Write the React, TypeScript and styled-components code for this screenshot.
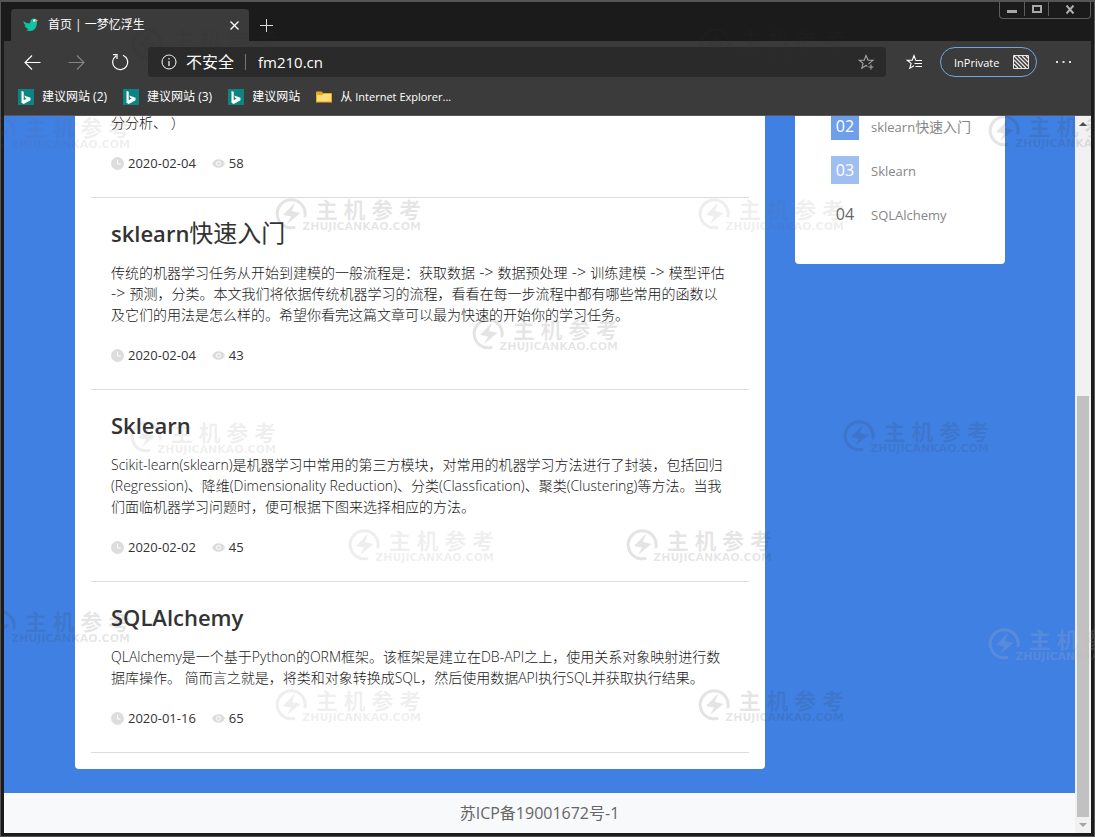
import React from 'react';
import styled, { createGlobalStyle } from 'styled-components';

const latin = '"Open Sans", "Noto Sans CJK SC", sans-serif';

const GlobalStyle = createGlobalStyle`
  *, *::before, *::after { box-sizing: border-box; }
  html, body { margin: 0; padding: 0; }
  body { font-family: ${latin}; background: #1b1b1b; }
  h2, p, ol, li { margin: 0; padding: 0; }
  ol { list-style: none; }
  a { color: inherit; text-decoration: none; }
  button { font: inherit; color: inherit; background: none; border: 0; padding: 0; cursor: pointer; }
  svg { display: block; flex: none; }
`;

/* ---------- window ---------- */

const Window = styled.div`
  position: relative;
  display: flex;
  flex-direction: column;
  height: 100vh;
  overflow: hidden;
  background: #1b1b1b;
  border: 1px solid #565656;
  border-top-width: 2px;
  padding: 0 3px 3px;
`;

const TabStrip = styled.div`
  display: flex;
  align-items: flex-end;
  flex: none;
  height: 39px;
  padding-left: 7px;
`;

const Tab = styled.div`
  display: flex;
  align-items: center;
  width: 238px;
  height: 32px;
  padding: 0 9px 0 12px;
  gap: 10px;
  border-radius: 4px 4px 0 0;
  background: #3b3b3b;
  color: #fff;
  font-size: 12px;
  line-height: 16px;
`;

const TabTitle = styled.span`
  flex: 1;
  white-space: nowrap;
`;

const StripButton = styled.button`
  display: grid;
  place-items: center;
  width: 12px;
  height: 32px;
`;

const NewTabButton = styled(StripButton)`
  width: 35px;
`;

const WindowControls = styled.div`
  display: flex;
  align-self: flex-start;
  margin-left: auto;
  height: 17px;
  border: 1px solid #5e5e5e;
  border-top: 0;
  border-radius: 0 0 4px 4px;
`;

const WindowButton = styled.button<{ $wide?: boolean }>`
  display: grid;
  place-items: center;
  width: ${(p) => (p.$wide ? 42 : 24)}px;
  height: 14px;
  border-left: 1px solid #5e5e5e;
  &:first-child { border-left: 0; }
`;

const Toolbar = styled.div`
  display: flex;
  align-items: center;
  flex: none;
  height: 42px;
  padding: 0 10px;
  gap: 8px;
  background: #3b3b3b;
  color: #fff;
`;

const ToolButton = styled.button`
  display: grid;
  place-items: center;
  flex: none;
  width: 36px;
  height: 30px;
`;

const AddressBar = styled.div`
  display: flex;
  align-items: center;
  flex: 1;
  min-width: 0;
  height: 30px;
  margin: 0 2px;
  padding: 0 11px 0 13px;
  border-radius: 4px;
  background: #2a2a2a;
  font-size: 16px;
`;

const Security = styled.span`
  margin-left: 9px;
  padding-right: 11px;
  border-right: 1px solid #777;
  line-height: 16px;
  white-space: nowrap;
`;

const AddressInput = styled.input`
  flex: 1;
  min-width: 0;
  padding: 0 0 0 12px;
  border: 0;
  outline: 0;
  background: none;
  color: #fff;
  font-family: ${latin};
  font-size: 15px;
`;

const InPrivate = styled.button`
  display: flex;
  align-items: center;
  justify-content: space-between;
  flex: none;
  width: 97px;
  height: 30px;
  padding: 0 7px 0 13px;
  border: 1px solid #6fa8dc;
  border-radius: 15px;
  font-size: 11px;
`;

const Bookmarks = styled.nav`
  display: flex;
  align-items: center;
  flex: none;
  gap: 16px;
  height: 33px;
  padding: 0 14px 4px;
  border-bottom: 1px solid #5a5555;
  background: #3b3b3b;
  color: #fff;
`;

const Bookmark = styled.a`
  display: flex;
  align-items: center;
  gap: 8px;
  font-size: 12px;
  line-height: 16px;
  white-space: nowrap;
`;

/* ---------- page ---------- */

const Viewport = styled.div`
  display: flex;
  flex: 1;
  min-height: 0;
`;

const Page = styled.div`
  display: flex;
  flex-direction: column;
  justify-content: flex-end;
  flex: 1;
  min-width: 0;
  overflow: hidden;
  background: #4080e3;
`;

const Columns = styled.div`
  display: flex;
  align-items: flex-start;
  flex: none;
  gap: 30px;
  padding: 0 70px 24px 71px;
`;

const ArticleList = styled.main`
  flex: 1;
  min-width: 0;
  padding: 0 16px 16px;
  border-radius: 0 0 4px 4px;
  background: #fff;
`;

const Article = styled.article`
  padding: 19px 20px 24px;
  border-bottom: 1px solid #ddd;
  color: #333;
  &:first-child { padding-top: 0; }
`;

/* Western words are set at their own size beside the Chinese around them. */
const Word = styled.span<{ $size: number; $weight?: number }>`
  font-size: ${(p) => p.$size}px;
  font-weight: ${(p) => p.$weight ?? 'inherit'};
  line-height: 1;
`;

const Title = styled.h2`
  margin-bottom: 13px;
  font-size: 24px;
  font-weight: 400;
  line-height: 32px;
`;

const Summary = styled.p`
  color: #151515;
  font-size: 14px;
  font-weight: 300;
  line-height: 21px;
  white-space: nowrap;
`;

const Meta = styled.div`
  display: flex;
  align-items: center;
  gap: 16px;
  margin-top: 20px;
  font-size: 13px;
  line-height: 20px;
`;

const MetaItem = styled.span`
  display: flex;
  align-items: center;
  gap: 4px;
`;

const Ranking = styled.aside`
  flex: none;
  width: 210px;
  padding: 0 16px 36px 36px;
  border-radius: 0 0 4px 4px;
  background: #fff;
`;

const RankList = styled.ol`
  display: grid;
  gap: 16px;
`;

const RankLink = styled.a`
  display: flex;
  align-items: center;
  gap: 12px;
  color: #868686;
  font-size: 14px;
  white-space: nowrap;
`;

const RankNumber = styled.span<{ $fill?: string }>`
  width: 28px;
  height: 28px;
  background: ${(p) => p.$fill ?? 'transparent'};
  color: ${(p) => (p.$fill ? '#fff' : '#666')};
  font-size: 16px;
  line-height: 28px;
  text-align: center;
`;

const Footer = styled.footer`
  flex: none;
  background: #f8f9fb;
  color: #666;
  font-size: 16px;
  line-height: 40px;
  text-align: center;
`;

const Scrollbar = styled.div`
  display: flex;
  flex-direction: column;
  flex: none;
  width: 16px;
  padding: 0 2px;
  background: #f1f1f1;
`;

const ScrollArrow = styled.button`
  display: grid;
  place-items: center;
  height: 16px;
`;

const ScrollGap = styled.div`
  flex: 264;
`;

const ScrollThumb = styled.div`
  flex: 421;
  background: #c1c1c1;
`;

/* ---------- watermark ---------- */

type Tone = 'dark' | 'soft' | 'pale';

const toneColor: Record<Tone, string> = {
  dark: 'rgba(50, 50, 50, 0.13)',
  soft: 'rgba(90, 90, 90, 0.1)',
  pale: 'rgba(185, 185, 185, 0.2)',
};

const MarkLayer = styled.div`
  position: absolute;
  inset: -2px 0 0 -1px;
  overflow: hidden;
  pointer-events: none;
`;

const Mark = styled.div<{ $x: number; $y: number; $tone: Tone }>`
  position: absolute;
  left: ${(p) => p.$x}px;
  top: ${(p) => p.$y}px;
  display: flex;
  width: 150px;
  color: ${(p) => toneColor[p.$tone]};
  white-space: nowrap;
`;

const MarkText = styled.div`
  display: flex;
  flex-direction: column;
  align-items: flex-end;
  width: 120px;
  margin-left: -6px;
`;

const MarkName = styled.span`
  font-size: 22px;
  font-weight: 700;
  line-height: 24px;
`;

const MarkSite = styled.span`
  font-family: "DejaVu Sans", sans-serif;
  font-size: 11px;
  font-weight: 700;
  line-height: 11px;
`;

const marks: [number, number, Tone][] = [
  [131, 27, 'dark'], [699, 27, 'dark'], [-16, 115, 'soft'], [988, 114, 'dark'],
  [275, 197, 'dark'], [698, 197, 'soft'], [472, 317, 'dark'], [130, 420, 'soft'],
  [843, 419, 'dark'], [348, 528, 'soft'], [626, 528, 'dark'], [-16, 609, 'dark'],
  [988, 627, 'pale'], [275, 688, 'soft'], [698, 688, 'dark'],
];

/* ---------- icons ---------- */

const Bird = () => (
  <svg width="15" height="16" viewBox="0 0 15 16">
    <path d="M.5 4c2 2 4.500 2.600 6.500 2.200C7 3.500 8.800 1.500 11 1.500c1.800 0 3 1.400 3 3.500C14 11 11 14 7 14c-2 0-3-.6-4-1 1 0 2-.3 2.500-1C3 11 2 10 1.500 8.500l1.500.2C1.500 7.500.500 6 .5 4z" fill="#0fc3a4" />
    <circle cx="11.200" cy="3.500" r="1.200" fill="#fff" />
    <path d="M12.500 2l2.500 1.600-2.500 1.200z" fill="#e6b13c" />
  </svg>
);

const Bing = () => (
  <svg width="16" height="16" viewBox="0 0 16 16">
    <path d="M0 0h16v16H0z" fill="#0c8484" />
    <path d="M3.500 2l2.200.8v8.400l2.900-1.700-1.500-.7-.9-2.200 6.300 2.200v2.400l-6.800 3.900-2.200-1.400z" fill="#fff" />
  </svg>
);

const Folder = () => (
  <svg width="16" height="16" viewBox="0 0 16 16">
    <path d="M0 3.500C0 3 .4 2.500 1 2.500h4.500L7 4h8c.6 0 1 .4 1 1v8.500H0z" fill="#e8a917" />
    <path d="M1 6h5l1.500-1H15v7.500H1z" fill="#ffdc7c" />
  </svg>
);

const Arrow = ({ flip }: { flip?: boolean }) => (
  <svg width="17" height="17" viewBox="0 0 17 17" fill="none" stroke={flip ? '#858585' : '#fff'} strokeWidth="1.100">
    {flip ? <path d="M.5 8.500H16M9 1.500l7 7-7 7" /> : <path d="M16.500 8.500H1M8 1.500l-7 7 7 7" />}
  </svg>
);

const Reload = () => (
  <svg width="18" height="18" viewBox="0 0 18 18" fill="none" stroke="#fff" strokeWidth="1.200">
    <path d="M12 2.200A7.500 7.500 0 1 1 5 2.900M2 1.700h4V6" />
  </svg>
);

const AddStar = () => (
  <svg width="17" height="17" viewBox="0 0 17 17" fill="none" stroke="#a5a5a5" strokeWidth="1.100">
    <path d="M10.500 10.200l.8-.8 3.700-3.100-4.900-.2L8 1.500 6.200 6.100l-4.900.2 3.800 3.100-1.300 4.800L8 11.500l1.500 1M13 10.500v5M10.500 13h5" />
  </svg>
);

const Favorites = () => (
  <svg width="17" height="16" viewBox="0 0 17 16" fill="none" stroke="#fff" strokeWidth="1.100">
    <path d="M9.600 6L8 1.500 6.200 6.100l-4.900.2 3.800 3.100-1.300 4.800L8 11.700M9.500 6.500H16M8.500 9.500H16M9.500 12.500H16" />
  </svg>
);

const Clock = () => (
  <svg width="13" height="13" viewBox="0 0 13 13">
    <circle cx="6.500" cy="6.500" r="6.500" fill="#ddd" />
    <path d="M6.500 3v4H9.500" fill="none" stroke="#fff" />
  </svg>
);

const Eye = () => (
  <svg width="13" height="13" viewBox="0 0 13 13">
    <path d="M0 6.500C2 .8 11 .8 13 6.500 11 12.200 2 12.200 0 6.500z" fill="#ddd" />
    <circle cx="6.500" cy="6.500" r="2" fill="none" stroke="#fff" />
  </svg>
);

const MarkLogo = () => (
  <svg width="32" height="33" viewBox="0 0 32 33">
    <path d="M19 30.500A14 14 0 1 1 30 19" fill="none" stroke="currentColor" strokeWidth="3" strokeLinecap="round" />
    <path d="M20 5.500L8 18l8 1.500-4 7.500L25.500 16l-8.500-2z" fill="currentColor" />
  </svg>
);

/* ---------- mixed-script text ---------- */

const Mixed = ({ text, size, weight }: { text: string; size: number; weight?: number }) => (
  <>
    {text.split(/( ?-> |[A-Za-z][A-Za-z. ]*[A-Za-z.])/).map((part, i) =>
      i % 2 ? <Word key={i} $size={size} $weight={weight}>{part}</Word> : part,
    )}
  </>
);

/* ---------- data ---------- */

const bookmarks = ['建议网站 (2)', '建议网站 (3)', '建议网站'];

const articles = [
  { lines: ['分分析、 ）'], date: '2020-02-04', views: 58 },
  {
    title: 'sklearn快速入门',
    lines: [
      '传统的机器学习任务从开始到建模的一般流程是：获取数据 -> 数据预处理 -> 训练建模 -> 模型评估',
      '-> 预测，分类。本文我们将依据传统机器学习的流程，看看在每一步流程中都有哪些常用的函数以',
      '及它们的用法是怎么样的。希望你看完这篇文章可以最为快速的开始你的学习任务。',
    ],
    date: '2020-02-04',
    views: 43,
  },
  {
    title: 'Sklearn',
    lines: [
      'Scikit-learn(sklearn)是机器学习中常用的第三方模块，对常用的机器学习方法进行了封装，包括回归',
      '(Regression)、降维(Dimensionality Reduction)、分类(Classfication)、聚类(Clustering)等方法。当我',
      '们面临机器学习问题时，便可根据下图来选择相应的方法。',
    ],
    date: '2020-02-02',
    views: 45,
  },
  {
    title: 'SQLAlchemy',
    lines: [
      'QLAlchemy是一个基于Python的ORM框架。该框架是建立在DB-API之上，使用关系对象映射进行数',
      '据库操作。 简而言之就是，将类和对象转换成SQL，然后使用数据API执行SQL并获取执行结果。',
    ],
    date: '2020-01-16',
    views: 65,
  },
];

const ranking = [
  { no: '02', name: 'sklearn快速入门', fill: '#6f9fea' },
  { no: '03', name: 'Sklearn', fill: '#a0bff1' },
  { no: '04', name: 'SQLAlchemy' },
];

export default function App() {
  return (
    <>
      <GlobalStyle />
      <Window>
        <TabStrip>
          <Tab>
            <Bird />
            <TabTitle>首页 | 一梦忆浮生</TabTitle>
            <StripButton aria-label="Close tab">
              <svg width="9" height="9" viewBox="0 0 9 9" stroke="#fff" strokeWidth="1.300"><path d="M.5.5l8 8M8.500.5l-8 8" /></svg>
            </StripButton>
          </Tab>
          <NewTabButton aria-label="New tab">
            <svg width="13" height="13" viewBox="0 0 13 13" stroke="#ddd"><path d="M6.500 0v13M0 6.500h13" /></svg>
          </NewTabButton>
          <WindowControls>
            <WindowButton aria-label="Minimize">
              <svg width="10" height="10" viewBox="0 0 10 10"><path d="M0 6h10v3H0z" fill="#a8a8a8" /></svg>
            </WindowButton>
            <WindowButton aria-label="Maximize">
              <svg width="10" height="8" viewBox="0 0 10 8" fill="none" stroke="#a8a8a8" strokeWidth="2"><path d="M1 1h8v6H1z" /></svg>
            </WindowButton>
            <WindowButton $wide aria-label="Close">
              <svg width="10" height="9" viewBox="0 0 10 9" stroke="#b0b0b0" strokeWidth="2"><path d="M1.500.5l7 8M8.500.5l-7 8" /></svg>
            </WindowButton>
          </WindowControls>
        </TabStrip>

        <Toolbar>
          <ToolButton aria-label="Back"><Arrow /></ToolButton>
          <ToolButton aria-label="Forward"><Arrow flip /></ToolButton>
          <ToolButton aria-label="Reload"><Reload /></ToolButton>
          <AddressBar>
            <svg width="16" height="16" viewBox="0 0 16 16" fill="none" stroke="#fff">
              <circle cx="8" cy="8" r="7" />
              <path d="M8 7v5M8 4v1.500" strokeWidth="1.200" />
            </svg>
            <Security>不安全</Security>
            <AddressInput aria-label="Address" defaultValue="fm210.cn" />
            <AddStar />
          </AddressBar>
          <ToolButton aria-label="Favorites"><Favorites /></ToolButton>
          <InPrivate>
            InPrivate
            <svg width="16" height="14" viewBox="0 0 16 14" fill="none" stroke="#e8e8e8">
              <path d="M.5.5h15v13H.5z" />
              <path d="M1 1l12 12M5 1l10 10M9 1l6 6M1 5l8 8M1 9l4 4M13 1l2 2" strokeWidth="1.300" />
            </svg>
          </InPrivate>
          <ToolButton aria-label="Menu">
            <svg width="15" height="3" viewBox="0 0 15 3" fill="#ddd"><path d="M0 0h2v2H0zM6.500 0h2v2h-2zM13 0h2v2h-2z" /></svg>
          </ToolButton>
        </Toolbar>

        <Bookmarks aria-label="Bookmarks">
          {bookmarks.map((name) => (
            <Bookmark href="#" key={name}><Bing />{name}</Bookmark>
          ))}
          <Bookmark href="#">
            <Folder />
            <span><Mixed text="从 Internet Explorer..." size={11} /></span>
          </Bookmark>
        </Bookmarks>

        <Viewport>
          <Page>
            <Columns>
              <ArticleList>
                {articles.map((a, i) => (
                  <Article key={i}>
                    {a.title && <Title><Mixed text={a.title} size={22} weight={600} /></Title>}
                    <Summary>
                      {a.lines.map((line, n) => (
                        <React.Fragment key={n}>
                          {n > 0 && <br />}
                          {line.includes('->') ? <Mixed text={line} size={16} /> : line}
                        </React.Fragment>
                      ))}
                    </Summary>
                    <Meta>
                      <MetaItem><Clock />{a.date}</MetaItem>
                      <MetaItem><Eye />{a.views}</MetaItem>
                    </Meta>
                  </Article>
                ))}
              </ArticleList>
              <Ranking>
                <RankList>
                  {ranking.map((r) => (
                    <li key={r.no}>
                      <RankLink href="#">
                        <RankNumber $fill={r.fill}>{r.no}</RankNumber>
                        <span><Mixed text={r.name} size={13} /></span>
                      </RankLink>
                    </li>
                  ))}
                </RankList>
              </Ranking>
            </Columns>
            <Footer>苏ICP备19001672号-1</Footer>
          </Page>
          <Scrollbar>
            <ScrollArrow aria-label="Scroll up">
              <svg width="8" height="4" viewBox="0 0 8 4"><path d="M0 4l4-4 4 4z" fill="#505050" /></svg>
            </ScrollArrow>
            <ScrollGap />
            <ScrollThumb />
            <ScrollArrow aria-label="Scroll down">
              <svg width="8" height="4" viewBox="0 0 8 4"><path d="M0 0l4 4 4-4z" fill="#a3a3a3" /></svg>
            </ScrollArrow>
          </Scrollbar>
        </Viewport>

        <MarkLayer aria-hidden="true">
          {marks.map(([x, y, tone]) => (
            <Mark key={`${x}-${y}`} $x={x} $y={y} $tone={tone}>
              <MarkLogo />
              <MarkText>
                <MarkName>主 机 参 考</MarkName>
                <MarkSite>ZHUJICANKAO.COM</MarkSite>
              </MarkText>
            </Mark>
          ))}
        </MarkLayer>
      </Window>
    </>
  );
}
